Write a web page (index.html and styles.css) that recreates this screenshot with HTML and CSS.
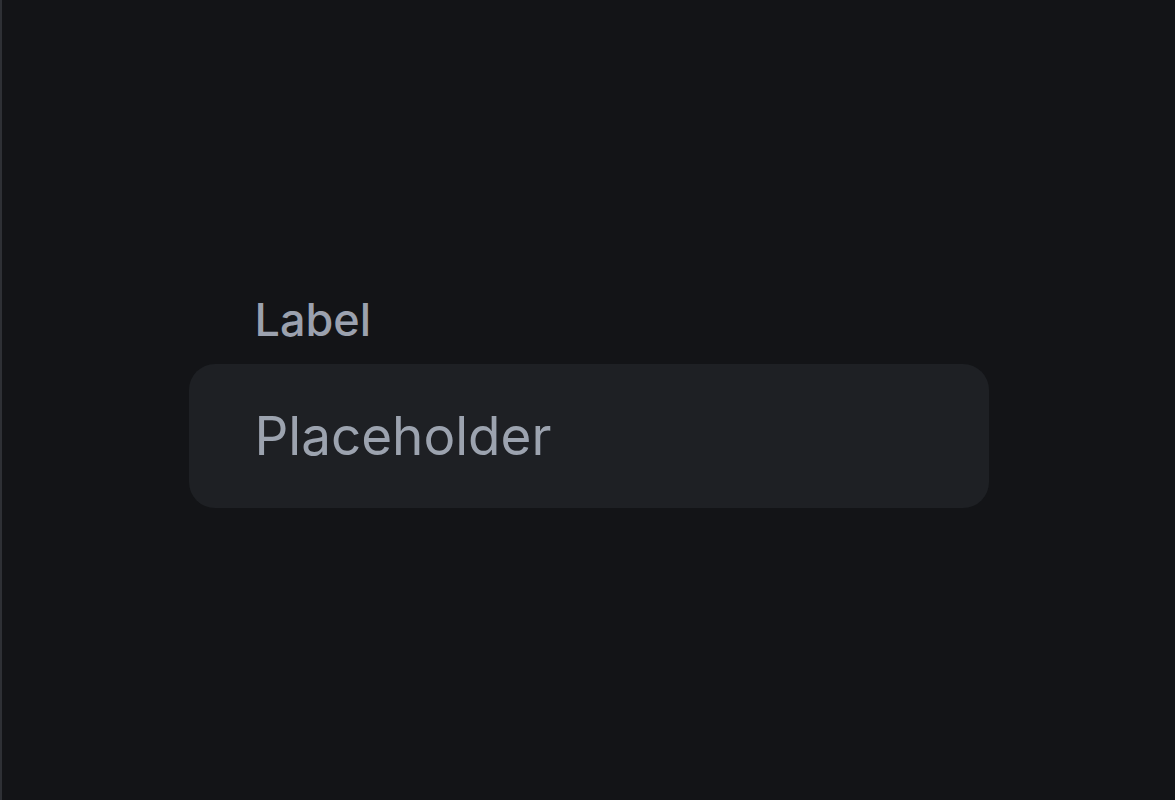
FILE: index.html
```html
<!DOCTYPE html>
<html>
<head>
<meta charset="utf-8">
<link rel="stylesheet" href="styles.css">
</head>
<body>
<main class="stage">
  <div class="field">
    <label class="field-label" for="inp">Label</label>
    <input id="inp" class="field-input" type="text" placeholder="Placeholder">
  </div>
</main>
</body>
</html>
```
FILE: styles.css
```css
html, body {
  margin: 0;
  height: 100%;
}
body {
  background: #131417;
  border-left: 2px solid #2e3035;
  box-sizing: border-box;
  font-family: "Inter", "Lato", sans-serif;
}
.stage {
  height: 100%;
  display: flex;
  align-items: center;
  justify-content: center;
  padding-top: 3px;
  box-sizing: border-box;
}
.field {
  width: 800px;
  display: flex;
  flex-direction: column;
  gap: 19px;
}
.field-label {
  padding-left: 66px;
  font-size: 45px;
  line-height: 50px;
  color: #9ba1ae;
  font-weight: 500;
}
.field-input {
  box-sizing: border-box;
  height: 144px;
  width: 100%;
  border: none;
  outline: none;
  border-radius: 26px;
  background: #1e2024;
  padding: 0 0 0 66px;
  font-family: inherit;
  font-size: 53px;
  color: #d0d4dc;
}
.field-input::placeholder {
  color: #9ca3af;
}
```
